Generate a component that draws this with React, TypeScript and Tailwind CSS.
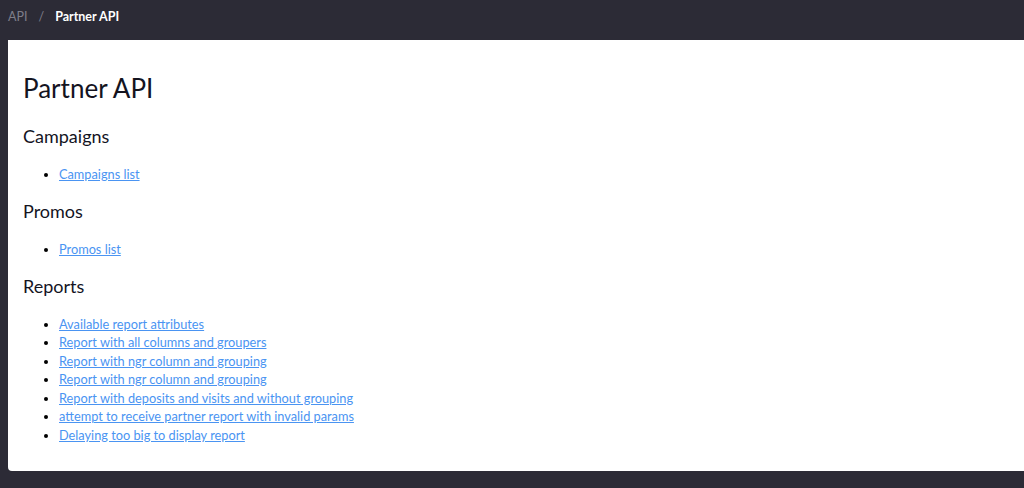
import React from "react";

const Section = ({ title, items, first }: { title: string; items: string[]; first?: boolean }) => (
  <div>
    <h2 className={`text-[18px] leading-[24px] text-[#14141f] ${first ? "mt-[19px]" : "mt-[16px]"}`}>{title}</h2>
    <ul className="mt-[16.5px] list-disc pl-[36px] text-[12.75px] leading-[18.5px]">
      {items.map((it, i) => (
        <li key={i} className="marker:text-black">
          <a href="#" className="text-[#4a94f2] underline">{it}</a>
        </li>
      ))}
    </ul>
  </div>
);

export default function App() {
  return (
    <div className="min-h-[488px] w-full bg-[#2c2b36]" style={{ fontFamily: "Lato, sans-serif" }}>
      <div className="flex h-[40px] items-center gap-[11px] px-[8px] pb-[6px] text-[12.5px]">
        <span className="text-[#7f7e8a]">API</span>
        <span className="text-[#7f7e8a]">/</span>
        <span className="font-bold text-white">Partner API</span>
      </div>
      <div className="ml-[8px] h-[431px] rounded-bl-[4px] bg-white pl-[15px] pt-[31px]">
        <h1 className="text-[26px] leading-[34px] text-[#14141f]">Partner API</h1>
        <Section first title="Campaigns" items={["Campaigns list"]} />
        <Section title="Promos" items={["Promos list"]} />
        <Section
          title="Reports"
          items={[
            "Available report attributes",
            "Report with all columns and groupers",
            "Report with ngr column and grouping",
            "Report with ngr column and grouping",
            "Report with deposits and visits and without grouping",
            "attempt to receive partner report with invalid params",
            "Delaying too big to display report",
          ]}
        />
      </div>
    </div>
  );
}
